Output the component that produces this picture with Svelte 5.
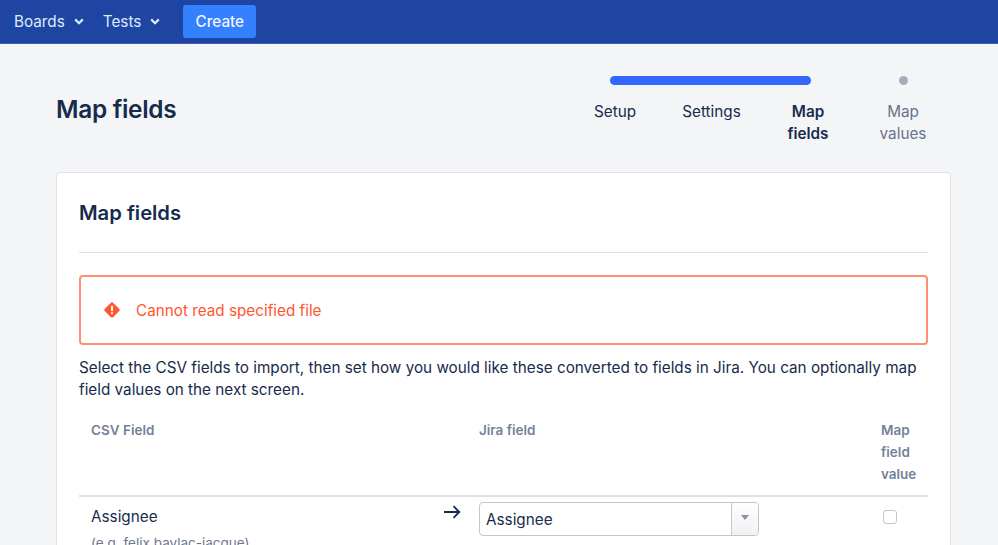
<script lang="ts">
	const steps = [
		{ label: "Setup", state: "done" },
		{ label: "Settings", state: "done" },
		{ label: "Map fields", state: "current" },
		{ label: "Map values", state: "todo" },
	];
</script>

<div class="page">
	<nav class="topbar">
		<button class="nav-item">
			Boards
			<svg width="10" height="7" viewBox="0 0 10 7"><path d="M1.2 1.4 5 5.2l3.8-3.8" /></svg>
		</button>
		<button class="nav-item">
			Tests
			<svg width="10" height="7" viewBox="0 0 10 7"><path d="M1.2 1.4 5 5.2l3.8-3.8" /></svg>
		</button>
		<button class="create">Create</button>
	</nav>

	<main class="main">
		<header class="head">
			<h1>Map fields</h1>
			<div class="wizard">
				<div class="track">
					<div class="bar"></div>
					<div class="dot"></div>
				</div>
				<ol class="steps">
					{#each steps as step}
						<li class={step.state}>{step.label}</li>
					{/each}
				</ol>
			</div>
		</header>

		<section class="card">
			<h2>Map fields</h2>
			<hr />
			<div class="error">
				<svg width="16" height="16" viewBox="0 0 16 16">
					<path class="diamond" d="M6.7.9a1.8 1.8 0 0 1 2.6 0l5.8 5.8a1.8 1.8 0 0 1 0 2.6l-5.8 5.8a1.8 1.8 0 0 1-2.6 0L.9 9.3a1.8 1.8 0 0 1 0-2.6z" />
					<rect x="7" y="3.6" width="2" height="5.6" rx="1" fill="#fff" />
					<circle cx="8" cy="11.2" r="1.1" fill="#fff" />
				</svg>
				<span>Cannot read specified file</span>
			</div>
			<p class="intro">Select the CSV fields to import, then set how you would like these converted to fields in Jira. You can optionally map field values on the next screen.</p>

			<table>
				<thead>
					<tr>
						<th class="csv">CSV Field</th>
						<th class="arrow-col"></th>
						<th class="jira">Jira field</th>
						<th class="value">Map<br />field<br />value</th>
					</tr>
				</thead>
				<tbody>
					<tr>
						<td class="csv">
							<div>Assignee</div>
							<div class="sample">(e.g. felix.baylac-jacque)</div>
						</td>
						<td class="arrow-col">
							<svg width="18" height="14" viewBox="0 0 18 14"><path d="M1 7h15M10.5 1.2 16.3 7l-5.8 5.8" /></svg>
						</td>
						<td class="jira">
							<div class="select">
								<span class="select-value">Assignee</span>
								<span class="select-btn"><i></i></span>
							</div>
						</td>
						<td class="value"><span class="check"></span></td>
					</tr>
				</tbody>
			</table>
		</section>
	</main>
</div>

<style>
	:global(body) {
		margin: 0;
		background: #f4f5f7;
	}

	.page {
		height: 545px;
		overflow: hidden;
		font-family: Inter, "Liberation Sans", sans-serif;
		font-size: 15.28px;
		color: #172b4d;
		background: #f4f5f7;
	}

	.topbar {
		height: 44px;
		box-sizing: border-box;
		display: flex;
		align-items: center;
		padding: 0 14px;
		background: #1e45a1;
		border-bottom: 1px solid #3f62b5;
	}

	.nav-item {
		display: flex;
		align-items: center;
		gap: 9px;
		margin-right: 19px;
		padding: 0;
		border: 0;
		background: none;
		font: inherit;
		color: #deebff;
	}

	.nav-item svg path {
		fill: none;
		stroke: #deebff;
		stroke-width: 2.2;
	}

	.create {
		height: 33px;
		width: 73px;
		margin-left: 4px;
		padding: 0;
		border: 0;
		border-radius: 3px;
		background: #3580ff;
		color: #f0f5ff;
		font: inherit;
		font-weight: 500;
	}

	.main {
		padding: 0 47px 0 56px;
	}

	.head {
		display: flex;
		justify-content: space-between;
		height: 128px;
	}

	h1 {
		margin: 49px 0 0;
		font-size: 24.4px;
		line-height: 32px;
		font-weight: 600;
		letter-spacing: -0.3px;
	}

	.wizard {
		width: 383px;
		margin-right: -3px;
		padding-top: 32px;
	}

	.track {
		display: flex;
		align-items: center;
		height: 9px;
		margin-left: 39px;
	}

	.bar {
		width: 201px;
		height: 9px;
		border-radius: 5px;
		background: #3366ff;
	}

	.dot {
		width: 9px;
		height: 9px;
		margin-left: 87.5px;
		border-radius: 50%;
		background: #a5adba;
	}

	.steps {
		display: grid;
		grid-template-columns: 88px 105px 88px 102px;
		margin: 16px 0 0;
		padding: 0;
		list-style: none;
		line-height: 22px;
		text-align: center;
	}

	.steps li {
		padding: 0 18px;
	}

	.steps .current {
		font-weight: 600;
	}

	.steps .todo {
		color: #66748c;
	}

	.card {
		box-sizing: border-box;
		width: 895px;
		padding: 27px 22px 0;
		background: #fff;
		border: 1px solid #dfe1e6;
		border-radius: 4px;
	}

	h2 {
		margin: 0;
		font-size: 20.2px;
		line-height: 26px;
		font-weight: 600;
	}

	hr {
		height: 1px;
		margin: 26px 0 22px;
		border: 0;
		background: #dcdfe4;
	}

	.error {
		box-sizing: border-box;
		height: 70px;
		display: flex;
		align-items: center;
		gap: 16px;
		padding: 0 23px;
		border: 2px solid #ff8f73;
		border-radius: 4px;
		color: #ff5630;
	}

	.diamond {
		fill: #ff5630;
	}

	.intro {
		margin: 12px 0 0;
		line-height: 22px;
	}

	table {
		width: 100%;
		margin-top: 7px;
		border-collapse: collapse;
		table-layout: fixed;
	}

	th {
		padding: 11px 0 10px;
		vertical-align: top;
		text-align: left;
		font-size: 13.5px;
		line-height: 22px;
		font-weight: 600;
		color: #75819a;
		border-bottom: 2px solid #dfe1e6;
	}

	td {
		padding: 0;
		vertical-align: top;
	}

	.csv {
		width: 341px;
		padding-left: 12px;
	}

	.arrow-col {
		width: 47px;
	}

	td.csv {
		padding-top: 9px;
		line-height: 22px;
	}

	.sample {
		margin-top: 4px;
		font-size: 13.5px;
		color: #6b778c;
	}

	td.arrow-col svg {
		display: block;
		margin: 8px 0 0 11px;
	}

	td.arrow-col path {
		fill: none;
		stroke: #172b4d;
		stroke-width: 1.8;
	}

	.jira {
		width: 401px;
	}

	td.jira {
		padding-top: 5px;
	}

	.select {
		box-sizing: border-box;
		width: 280px;
		height: 34px;
		display: flex;
		border: 1px solid #c1c7d0;
		border-radius: 4px;
		background: #fff;
	}

	.select-value {
		flex: 1;
		padding-left: 6px;
		line-height: 33px;
	}

	.select-btn {
		width: 26px;
		display: flex;
		align-items: center;
		justify-content: center;
		border-left: 1px solid #c1c7d0;
		border-radius: 0 3px 3px 0;
		background: linear-gradient(#fff, #f0f1f3);
	}

	.select-btn i {
		width: 0;
		height: 0;
		margin-top: -3px;
		border: 4.5px solid transparent;
		border-top: 5px solid #8993a4;
		border-bottom: 0;
	}

	th.value {
		padding-left: 1px;
	}

	td.value {
		padding-top: 13px;
	}

	.check {
		display: block;
		box-sizing: border-box;
		width: 14px;
		height: 14px;
		margin-left: 3px;
		border: 1.5px solid #c1c7d0;
		border-radius: 3px;
	}
</style>
